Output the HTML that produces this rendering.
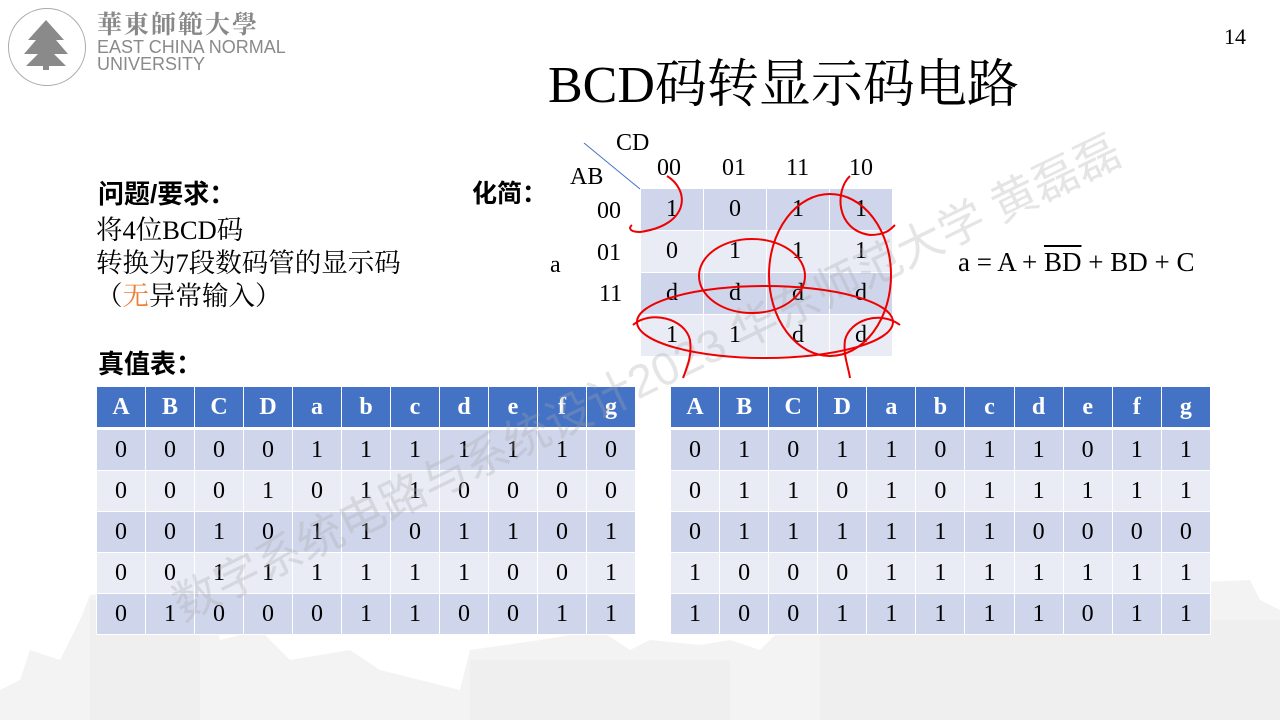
<!DOCTYPE html>
<html><head><meta charset="utf-8"><style>
body{margin:0;width:1280px;height:720px;position:relative;overflow:hidden;background:#fff;font-family:"Liberation Serif","Noto Serif CJK SC",serif;}
.abs{position:absolute}
.cn{font-family:"Liberation Sans","Noto Sans CJK SC",sans-serif}
table{position:absolute;border-collapse:collapse;table-layout:fixed}
td{text-align:center;font-size:24px;padding:0;border:1px solid #fff;height:40px;color:#000}
tr.h td{background:#4472c4;color:#fff;font-weight:bold;border-bottom:3px solid #fff}
tr.d td{background:#cfd5ea}
tr.l td{background:#e9ebf5}
.km td{width:62px;height:41px;font-size:24px}
</style></head><body>
<svg class="abs" style="left:0;top:0" width="1280" height="720">
<g fill="#f3f3f3">
<polygon points="0,720 0,690 20,680 30,650 60,660 80,620 90,595 150,590 210,600 220,640 260,630 290,660 350,650 380,670 420,680 460,690 470,650 540,640 600,630 630,650 650,640 700,645 730,640 760,650 790,620 810,605 990,605 1010,590 1250,580 1260,600 1280,610 1280,720"/>
</g>
<g fill="#ececec" opacity="0.7">
<rect x="90" y="600" width="110" height="120"/>
<rect x="820" y="620" width="460" height="100"/>
<rect x="470" y="660" width="260" height="60"/>
</g>
</svg>
<div class="abs" style="left:8px;top:8px;width:76px;height:76px;border-radius:50%;border:1px solid #aaa"></div>
<svg class="abs" style="left:20px;top:18px" width="52" height="54"><g fill="#8a8a8a"><polygon points="26,2 8,22 16,22 4,36 18,36 6,48 46,48 34,36 48,36 36,22 44,22"/><rect x="23" y="44" width="6" height="8"/></g></svg>
<div class="abs" style="left:97px;top:8px;font-size:25px;line-height:30px;color:#888;letter-spacing:2px;font-weight:bold;font-family:'Noto Serif CJK SC',serif">華東師範大學</div>
<div class="abs cn" style="left:97px;top:39px;font-size:18px;color:#8a8a8a;line-height:17px;white-space:nowrap">EAST CHINA NORMAL<br>UNIVERSITY</div>
<div class="abs" style="left:1224px;top:24px;font-size:22px">14</div>
<div class="abs" style="left:548px;top:42px;font-size:52px;white-space:nowrap">BCD码转显示码电路</div>
<div class="abs cn" style="left:98px;top:174px;font-size:26px;font-weight:bold">问题/要求：</div>
<div class="abs cn" style="left:472px;top:174px;font-size:25px;font-weight:bold">化简：</div>
<div class="abs" style="left:96px;top:214px;font-size:26.5px;line-height:33px;white-space:nowrap">将4位BCD码<br>转换为7段数码管的显示码<br>（<span style="color:#ed7d31">无</span>异常输入）</div>
<div class="abs cn" style="left:98px;top:344px;font-size:26px;font-weight:bold">真值表：</div>
<div class="abs" style="left:616px;top:130px;font-size:24px">CD</div>
<div class="abs" style="left:570px;top:164px;font-size:24px">AB</div>
<div class="abs" style="left:657px;top:155px;font-size:24px">00</div>
<div class="abs" style="left:722px;top:155px;font-size:24px">01</div>
<div class="abs" style="left:786px;top:155px;font-size:24px">11</div>
<div class="abs" style="left:849px;top:155px;font-size:24px">10</div>
<div class="abs" style="left:597px;top:198px;font-size:24px">00</div>
<div class="abs" style="left:597px;top:240px;font-size:24px">01</div>
<div class="abs" style="left:599px;top:281px;font-size:24px">11</div>
<div class="abs" style="left:550px;top:252px;font-size:24px">a</div>
<table class="km" style="left:640px;top:188px">
<tr class="d"><td>1</td><td>0</td><td>1</td><td>1</td></tr>
<tr class="l"><td>0</td><td>1</td><td>1</td><td>1</td></tr>
<tr class="d"><td>d</td><td>d</td><td>d</td><td>d</td></tr>
<tr class="l"><td>1</td><td>1</td><td>d</td><td>d</td></tr>
</table>
<div class="abs" style="left:958px;top:247px;font-size:27px;white-space:nowrap">a = A + <span style="text-decoration:overline">B</span><span style="text-decoration:overline">D</span> + BD + C</div>
<table style="left:96px;top:386px;width:540px">
<tr class="h"><td>A</td><td>B</td><td>C</td><td>D</td><td>a</td><td>b</td><td>c</td><td>d</td><td>e</td><td>f</td><td>g</td></tr>
<tr class="d"><td>0</td><td>0</td><td>0</td><td>0</td><td>1</td><td>1</td><td>1</td><td>1</td><td>1</td><td>1</td><td>0</td></tr>
<tr class="l"><td>0</td><td>0</td><td>0</td><td>1</td><td>0</td><td>1</td><td>1</td><td>0</td><td>0</td><td>0</td><td>0</td></tr>
<tr class="d"><td>0</td><td>0</td><td>1</td><td>0</td><td>1</td><td>1</td><td>0</td><td>1</td><td>1</td><td>0</td><td>1</td></tr>
<tr class="l"><td>0</td><td>0</td><td>1</td><td>1</td><td>1</td><td>1</td><td>1</td><td>1</td><td>0</td><td>0</td><td>1</td></tr>
<tr class="d"><td>0</td><td>1</td><td>0</td><td>0</td><td>0</td><td>1</td><td>1</td><td>0</td><td>0</td><td>1</td><td>1</td></tr>
</table>
<table style="left:670px;top:386px;width:541px">
<tr class="h"><td>A</td><td>B</td><td>C</td><td>D</td><td>a</td><td>b</td><td>c</td><td>d</td><td>e</td><td>f</td><td>g</td></tr>
<tr class="d"><td>0</td><td>1</td><td>0</td><td>1</td><td>1</td><td>0</td><td>1</td><td>1</td><td>0</td><td>1</td><td>1</td></tr>
<tr class="l"><td>0</td><td>1</td><td>1</td><td>0</td><td>1</td><td>0</td><td>1</td><td>1</td><td>1</td><td>1</td><td>1</td></tr>
<tr class="d"><td>0</td><td>1</td><td>1</td><td>1</td><td>1</td><td>1</td><td>1</td><td>0</td><td>0</td><td>0</td><td>0</td></tr>
<tr class="l"><td>1</td><td>0</td><td>0</td><td>0</td><td>1</td><td>1</td><td>1</td><td>1</td><td>1</td><td>1</td><td>1</td></tr>
<tr class="d"><td>1</td><td>0</td><td>0</td><td>1</td><td>1</td><td>1</td><td>1</td><td>1</td><td>0</td><td>1</td><td>1</td></tr>
</table>
<div class="abs cn" style="left:160px;top:575px;font-size:46px;color:rgba(170,170,170,0.3);transform:rotate(-26deg);transform-origin:left top;white-space:nowrap">数字系统电路与系统设计2023 华东师范大学 黄磊磊</div>
<svg class="abs" style="left:0;top:0" width="1280" height="720">
<line x1="584" y1="143" x2="640" y2="189" stroke="#4472c4" stroke-width="1"/>
<g fill="none" stroke="#e00" stroke-width="2">
<path d="M667,176 C690,190 690,225 640,232 C630,232 628,228 632,225"/>
<path d="M850,176 C835,190 835,230 870,235 C885,235 890,230 895,225"/>
<ellipse cx="752" cy="276" rx="53" ry="37"/>
<ellipse cx="830" cy="275" rx="61" ry="81"/>
<ellipse cx="765" cy="322" rx="128" ry="36"/>
<path d="M633,325 C650,310 685,318 690,340 C692,355 688,365 683,378"/>
<path d="M900,325 C880,310 850,320 845,340 C843,355 848,365 850,378"/>
</g>
</svg>
</body></html>
